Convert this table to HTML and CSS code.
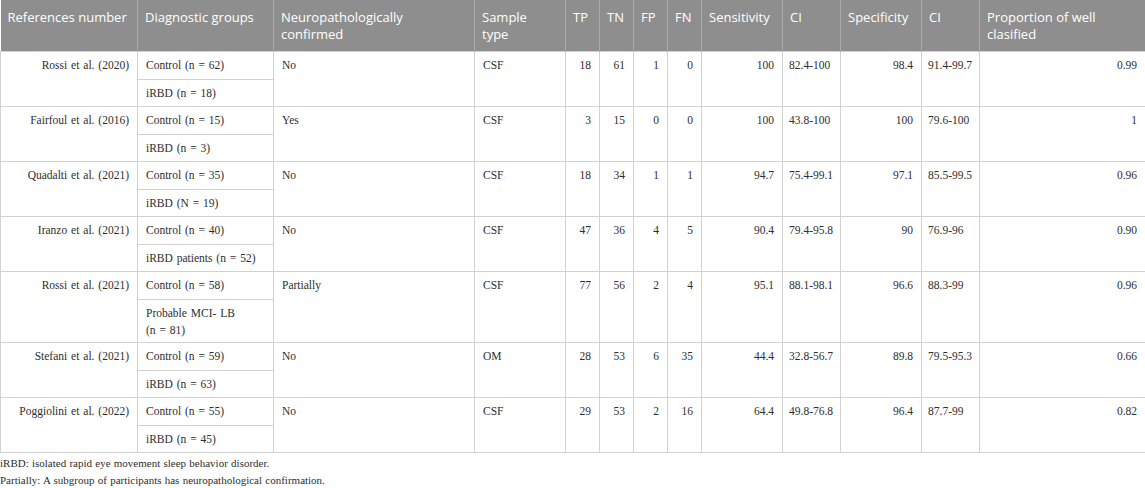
FILE: index.html
```html
<!DOCTYPE html>
<html lang="en">
<head>
<meta charset="utf-8">
<title>Table</title>
<link rel="stylesheet" href="styles.css">
</head>
<body>
<div class="wrap">
<table class="data">
<colgroup>
<col class="c1"><col class="c2"><col class="c3"><col class="c4">
<col class="c5"><col class="c5"><col class="c5"><col class="c5">
<col class="c9"><col class="c10"><col class="c9"><col class="c10"><col class="c13">
</colgroup>
<thead>
<tr>
<th>References number</th>
<th>Diagnostic groups</th>
<th>Neuropathologically confirmed</th>
<th class="narrow">Sample type</th>
<th>TP</th>
<th>TN</th>
<th>FP</th>
<th>FN</th>
<th>Sensitivity</th>
<th>CI</th>
<th>Specificity</th>
<th>CI</th>
<th>Proportion of well clasified</th>
</tr>
</thead>
<tbody>
<tr>
<td rowspan="2" class="r">Rossi et al. (2020)</td>
<td>Control (n = 62)</td>
<td rowspan="2">No</td>
<td rowspan="2">CSF</td>
<td rowspan="2" class="r">18</td>
<td rowspan="2" class="r">61</td>
<td rowspan="2" class="r">1</td>
<td rowspan="2" class="r">0</td>
<td rowspan="2" class="r">100</td>
<td rowspan="2" class="nw">82.4-100</td>
<td rowspan="2" class="r">98.4</td>
<td rowspan="2" class="nw">91.4-99.7</td>
<td rowspan="2" class="r">0.99</td>
</tr>
<tr><td>iRBD (n = 18)</td></tr>
<tr>
<td rowspan="2" class="r">Fairfoul et al. (2016)</td>
<td>Control (n = 15)</td>
<td rowspan="2">Yes</td>
<td rowspan="2">CSF</td>
<td rowspan="2" class="r">3</td>
<td rowspan="2" class="r">15</td>
<td rowspan="2" class="r">0</td>
<td rowspan="2" class="r">0</td>
<td rowspan="2" class="r">100</td>
<td rowspan="2" class="nw">43.8-100</td>
<td rowspan="2" class="r">100</td>
<td rowspan="2" class="nw">79.6-100</td>
<td rowspan="2" class="r">1</td>
</tr>
<tr><td>iRBD (n = 3)</td></tr>
<tr>
<td rowspan="2" class="r">Quadalti et al. (2021)</td>
<td>Control (n = 35)</td>
<td rowspan="2">No</td>
<td rowspan="2">CSF</td>
<td rowspan="2" class="r">18</td>
<td rowspan="2" class="r">34</td>
<td rowspan="2" class="r">1</td>
<td rowspan="2" class="r">1</td>
<td rowspan="2" class="r">94.7</td>
<td rowspan="2" class="nw">75.4-99.1</td>
<td rowspan="2" class="r">97.1</td>
<td rowspan="2" class="nw">85.5-99.5</td>
<td rowspan="2" class="r">0.96</td>
</tr>
<tr><td>iRBD (N = 19)</td></tr>
<tr>
<td rowspan="2" class="r">Iranzo et al. (2021)</td>
<td>Control (n = 40)</td>
<td rowspan="2">No</td>
<td rowspan="2">CSF</td>
<td rowspan="2" class="r">47</td>
<td rowspan="2" class="r">36</td>
<td rowspan="2" class="r">4</td>
<td rowspan="2" class="r">5</td>
<td rowspan="2" class="r">90.4</td>
<td rowspan="2" class="nw">79.4-95.8</td>
<td rowspan="2" class="r">90</td>
<td rowspan="2" class="nw">76.9-96</td>
<td rowspan="2" class="r">0.90</td>
</tr>
<tr><td>iRBD patients (n = 52)</td></tr>
<tr>
<td rowspan="2" class="r">Rossi et al. (2021)</td>
<td>Control (n = 58)</td>
<td rowspan="2">Partially</td>
<td rowspan="2">CSF</td>
<td rowspan="2" class="r">77</td>
<td rowspan="2" class="r">56</td>
<td rowspan="2" class="r">2</td>
<td rowspan="2" class="r">4</td>
<td rowspan="2" class="r">95.1</td>
<td rowspan="2" class="nw">88.1-98.1</td>
<td rowspan="2" class="r">96.6</td>
<td rowspan="2" class="nw">88.3-99</td>
<td rowspan="2" class="r">0.96</td>
</tr>
<tr><td class="two">Probable MCI- LB<br>(n = 81)</td></tr>
<tr>
<td rowspan="2" class="r">Stefani et al. (2021)</td>
<td>Control (n = 59)</td>
<td rowspan="2">No</td>
<td rowspan="2">OM</td>
<td rowspan="2" class="r">28</td>
<td rowspan="2" class="r">53</td>
<td rowspan="2" class="r">6</td>
<td rowspan="2" class="r">35</td>
<td rowspan="2" class="r">44.4</td>
<td rowspan="2" class="nw">32.8-56.7</td>
<td rowspan="2" class="r">89.8</td>
<td rowspan="2" class="nw">79.5-95.3</td>
<td rowspan="2" class="r">0.66</td>
</tr>
<tr><td>iRBD (n = 63)</td></tr>
<tr>
<td rowspan="2" class="r">Poggiolini et al. (2022)</td>
<td>Control (n = 55)</td>
<td rowspan="2">No</td>
<td rowspan="2">CSF</td>
<td rowspan="2" class="r">29</td>
<td rowspan="2" class="r">53</td>
<td rowspan="2" class="r">2</td>
<td rowspan="2" class="r">16</td>
<td rowspan="2" class="r">64.4</td>
<td rowspan="2" class="nw">49.8-76.8</td>
<td rowspan="2" class="r">96.4</td>
<td rowspan="2" class="nw">87.7-99</td>
<td rowspan="2" class="r">0.82</td>
</tr>
<tr><td>iRBD (n = 45)</td></tr>
</tbody>
</table>
<div class="notes">
<p>iRBD: isolated rapid eye movement sleep behavior disorder.</p>
<p>Partially: A subgroup of participants has neuropathological confirmation.</p>
</div>
</div>
</body>
</html>
```
FILE: styles.css
```css
html, body {
  margin: 0;
  padding: 0;
  background: #ffffff;
}

.wrap {
  width: 1145px;
}

.data {
  width: 1145px;
  table-layout: fixed;
  border-collapse: collapse;
  font-family: "Liberation Serif", "Times New Roman", serif;
  font-size: 11.5px;
  color: #2e2e2e;
}

.c1 { width: 137px; }
.c2 { width: 136px; }
.c3 { width: 201px; }
.c4 { width: 91px; }
.c5 { width: 34px; }
.c9 { width: 81px; }
.c10 { width: 58px; }
.c13 { width: 166px; }

.data th {
  background: #8e8e8e;
  color: #ffffff;
  font-family: "Open Sans", "Noto Sans", sans-serif;
  font-weight: 400;
  font-size: 13px;
  line-height: 17px;
  text-align: left;
  vertical-align: top;
  padding: 9px 7px 7px 7px;
  height: 35px;
  border-left: 1px solid #a9a9a9;
  border-right: 1px solid #a9a9a9;
}

.data th:first-child {
  border-left: none;
}

.data th.narrow {
  padding-right: 16px;
}

.data td {
  padding: 5px 8px 4.5px 8px;
  line-height: 17px;
  vertical-align: top;
  border: 1px solid #d2d2d2;
  word-spacing: 1px;
}

.data td.r {
  text-align: right;
}

.data td.nw {
  white-space: nowrap;
  padding-left: 6px;
  padding-right: 4px;
}

.data td.two {
  padding-bottom: 3.5px;
}

.notes {
  font-family: "Liberation Serif", "Times New Roman", serif;
  font-size: 11px;
  color: #2e2e2e;
  padding-top: 2px;
}

.notes p {
  margin: 0;
  line-height: 17px;
  word-spacing: 0.5px;
}
```
